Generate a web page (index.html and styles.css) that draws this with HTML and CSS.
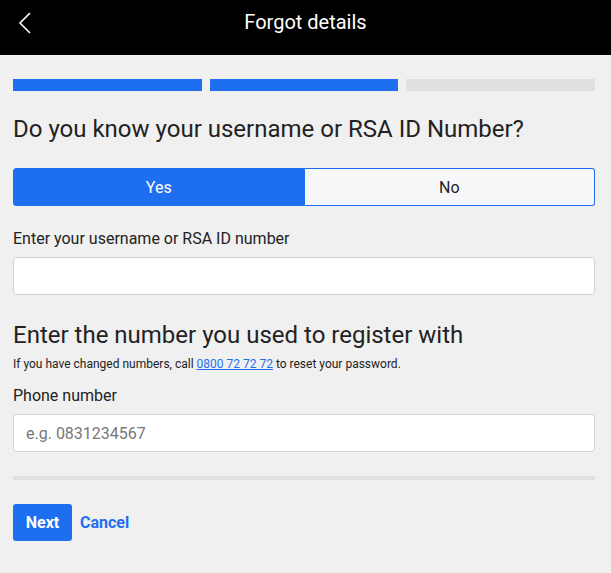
FILE: index.html
```html
<!DOCTYPE html>
<html lang="en">
<head>
  <meta charset="UTF-8">
  <meta name="viewport" content="width=device-width, initial-scale=1.0">
  <title>Forgot details</title>
  <link rel="stylesheet" href="styles.css">
</head>
<body>
  <header class="top-bar">
    <a class="back" href="#" aria-label="Back">
      <svg width="14" height="24" viewBox="0 0 14 24">
        <path d="M12 2 L2 12 L12 22" fill="none" stroke="#fff" stroke-width="1.6"/>
      </svg>
    </a>
    <h1 class="top-title">Forgot details</h1>
  </header>

  <main class="form-wrap">
    <div class="steps">
      <span class="step done"></span>
      <span class="step done"></span>
      <span class="step"></span>
    </div>

    <h2 class="question">Do you know your username or RSA ID Number?</h2>

    <div class="toggle">
      <button class="toggle-btn active">Yes</button>
      <button class="toggle-btn">No</button>
    </div>

    <label class="field-label" for="username">Enter your username or RSA ID number</label>
    <input class="field" id="username" type="text">

    <h2 class="section-title">Enter the number you used to register with</h2>
    <p class="hint">If you have changed numbers, call <a href="#">0800 72 72 72</a> to reset your password.</p>

    <label class="field-label phone-label" for="phone">Phone number</label>
    <input class="field" id="phone" type="tel" placeholder="e.g. 0831234567">

    <hr class="divider">

    <div class="actions">
      <button class="btn-next">Next</button>
      <a class="btn-cancel" href="#">Cancel</a>
    </div>
  </main>
</body>
</html>
```

FILE: styles.css
```css
* {
  margin: 0;
  padding: 0;
  box-sizing: border-box;
}
body {
  font-family: Roboto, "Liberation Sans", sans-serif;
  background-color: #f0f0f0;
  color: #222;
}
.top-bar {
  height: 55px;
  background: #000;
  display: flex;
  align-items: center;
  justify-content: center;
  position: relative;
}
.back {
  position: absolute;
  left: 18px;
  top: 11px;
  display: flex;
}
.top-title {
  color: #fff;
  font-size: 20px;
  font-weight: 400;
  margin-top: -11px;
}
.form-wrap {
  padding: 24px 16px 0 13px;
  display: flex;
  flex-direction: column;
}
.steps {
  display: flex;
  gap: 8px;
}
.step {
  flex: 1;
  height: 12px;
  background: #e0e0e0;
}
.step.done {
  background: #1e6ff0;
}
.question {
  font-size: 24px;
  font-weight: 400;
  line-height: 28px;
  margin-top: 24px;
}
.toggle {
  display: flex;
  margin-top: 25px;
  height: 38px;
}
.toggle-btn {
  flex: 1;
  font-family: inherit;
  font-size: 16px;
  border: 1px solid #1e6ff0;
  background: #f7f8fa;
  color: #222;
}
.toggle-btn:first-child {
  border-radius: 3px 0 0 3px;
}
.toggle-btn:last-child {
  border-radius: 0 3px 3px 0;
  border-left: none;
}
.toggle-btn.active {
  background: #1e6ff0;
  color: #fff;
}
.field-label {
  font-size: 16px;
  line-height: 20px;
  margin-top: 23px;
}
.phone-label {
  margin-top: 14px;
}
.field {
  margin-top: 8px;
  height: 38px;
  border: 1px solid #d0d4da;
  border-radius: 4px;
  background: #fff;
  font-family: inherit;
  font-size: 16px;
  padding: 0 12px;
}
.field::placeholder {
  color: #777;
}
.section-title {
  font-size: 24px;
  font-weight: 400;
  line-height: 28px;
  margin-top: 26px;
}
.hint {
  font-size: 12px;
  line-height: 16px;
  margin-top: 7px;
}
.hint a {
  color: #1e6ff0;
}
.divider {
  border: none;
  height: 4px;
  background: #e0e0e0;
  margin-top: 24px;
}
.actions {
  display: flex;
  align-items: center;
  gap: 8px;
  margin-top: 24px;
}
.btn-next {
  height: 37px;
  width: 59px;
  background: #1e6ff0;
  color: #fff;
  border: none;
  border-radius: 3px;
  font-family: inherit;
  font-size: 16px;
  font-weight: 700;
}
.btn-cancel {
  color: #1e6ff0;
  font-size: 16px;
  font-weight: 700;
  text-decoration: none;
}
```
